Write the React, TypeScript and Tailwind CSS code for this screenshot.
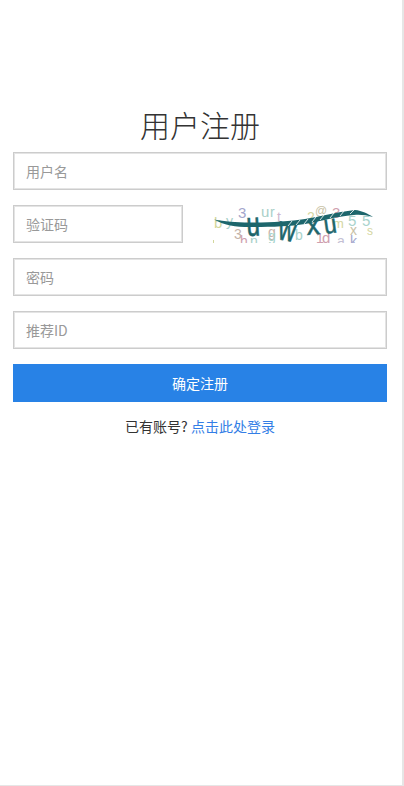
const font = { fontFamily: '"Noto Sans CJK SC", sans-serif' };

const Field = ({ placeholder, className }: { placeholder: string; className: string }) => (
  <input
    type="text"
    placeholder={placeholder}
    className={`h-[38px] border border-[#cccccc] bg-white px-3 text-sm text-[#333] outline-none placeholder:text-[#999999] shadow-[inset_0_0_0_1px_#e4e4e4] ${className}`}
  />
);

// noise letters behind the captcha word: char, x, baseline, colour, size
const noise: [string, number, number, string, number][] = [
  ["3", 238, 218, "#a3a6cc", 15],
  ["u", 261, 217, "#a8cfc8", 15],
  ["r", 270, 217, "#a8cfc8", 14],
  ["t", 277, 222, "#cdb7cf", 14],
  ["b", 214, 228, "#d3d79c", 15],
  ["y", 226, 226, "#a8cfc8", 14],
  ["3", 234, 239, "#c4b3a8", 14],
  ["g", 268, 237, "#c8b1a9", 14],
  ["g", 268, 241, "#a8d3cc", 14],
  ["b", 295, 240, "#a8d3cc", 14],
  ["h", 240, 246, "#cf9fae", 14],
  ["n", 250, 246, "#a8cfc8", 14],
  ["2", 307, 222, "#d4d6a0", 14],
  ["@", 315, 215, "#c9c2a6", 12],
  ["3", 332, 218, "#cf9fae", 15],
  ["m", 333, 228, "#d4d6a0", 13],
  ["5", 348, 226, "#a8d3cc", 15],
  ["5", 362, 226, "#a8d3cc", 15],
  ["x", 350, 235, "#c9c2a6", 14],
  ["s", 367, 235, "#d4d6a0", 12],
  ["1", 316, 243, "#cf9fae", 14],
  ["d", 322, 243, "#cf9fae", 15],
  ["a", 337, 246, "#c4bfd4", 14],
  ["k", 350, 246, "#a3a6cc", 14],
];

const Captcha = () => (
  <svg width="160" height="38" viewBox="213 205 160 38" className="shrink-0">
    {noise.map(([c, x, y, fill, size], i) => (
      <text key={i} x={x} y={y} fill={fill} fontSize={size} fontFamily="Liberation Sans, sans-serif">
        {c}
      </text>
    ))}
    <path d="M213.5 240 V243" stroke="#d3d79c" />
    <g fill="#1d666c" stroke="#1d666c" strokeWidth="0.5" fontFamily="Liberation Sans, sans-serif" fontSize="24">
      <text transform="translate(247 236) rotate(-3) scale(1 1.4)">u</text>
      <text transform="translate(277 239) rotate(10) scale(1 1.4)">w</text>
      <text transform="translate(307 235) rotate(-4) scale(1.1 1.2)">x</text>
      <text transform="translate(325 234) rotate(-8) scale(0.95 1.1)">u</text>
    </g>
    <path
      d="M214 219.5 C225 221.5 235 222.5 250 222.5 C270 222.5 290 221.5 305 219 C320 216.5 335 212.5 355 210 C362 210.5 368 214 373 217 C366 215 360 214.5 354 215 C335 216.5 320 221.5 305 224 C290 226.5 270 227 250 227 C235 227 225 225.5 214 219.5 Z"
      fill="#1d666c"
    />
    <path
      d="M288 226 L292 221 M296 225 L300 220 M304 224 L308 219 M312 222 L316 217 M320 220 L324 215 M330 218 L334 213 M340 216 L344 211 M350 214 L354 210"
      stroke="#ffffff"
      strokeWidth="0.8"
    />
  </svg>
);

export default function App() {
  return (
    <div style={font} className="h-[786px] w-[404px] bg-white">
      <div className="flex h-full w-[404px] flex-col border-r-2 border-b border-[#e6e6e6] px-[13px] pt-[104px]">
        <h1 className="mb-[8px] h-10 w-[374px] text-center text-[30px] font-light leading-10 text-[#333333]">用户注册</h1>
        <div className="flex w-[374px] flex-col gap-[15px]">
          <Field placeholder="用户名" className="w-full" />
          <div className="flex items-center gap-[30px]">
            <Field placeholder="验证码" className="w-[170px]" />
            <Captcha />
          </div>
          <Field placeholder="密码" className="w-full" />
          <Field placeholder="推荐ID" className="w-full" />
          <button className="h-[38px] w-full bg-[#2882e6] text-sm text-white">确定注册</button>
        </div>
        <p className="mt-[14px] w-[374px] text-center text-sm leading-5 text-[#333333]">
          已有账号? <a className="text-[#337ee6]">点击此处登录</a>
        </p>
      </div>
    </div>
  );
}
